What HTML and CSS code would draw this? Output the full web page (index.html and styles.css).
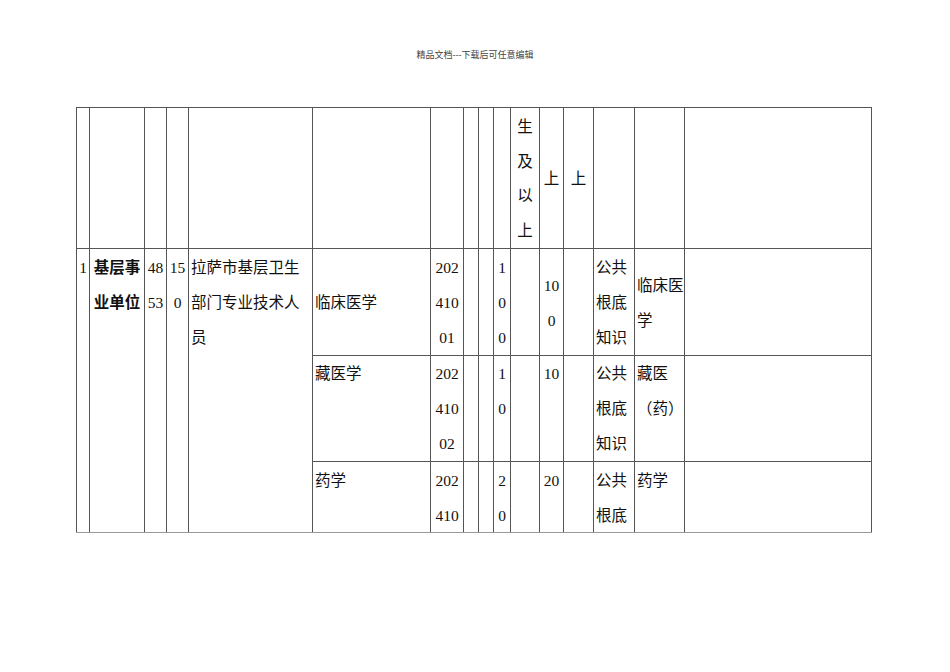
FILE: index.html
```html
<!DOCTYPE html>
<html lang="zh-CN">
<head>
<meta charset="utf-8">
<title>精品文档</title>
<link rel="stylesheet" href="styles.css">
</head>
<body>
<div class="page-head">精品文档---下载后可任意编辑</div>
<div class="sheet">
<table class="grid">
<colgroup>
<col class="c13"><col class="c55"><col class="c22"><col class="c22"><col class="c124"><col class="c118"><col class="c33"><col class="c15"><col class="c15"><col class="c17"><col class="c29"><col class="c24"><col class="c30"><col class="c41"><col class="c50"><col class="c187">
</colgroup>
<tr class="r-head">
<td></td><td></td><td></td><td></td><td></td><td></td><td></td><td></td><td></td><td></td>
<td class="mid ctr stack">生<br>及<br>以<br>上</td>
<td class="mid ctr">上</td>
<td class="mid ctr">上</td>
<td></td><td></td><td></td>
</tr>
<tr class="r1">
<td rowspan="3" class="ctr">1</td>
<td rowspan="3" class="ctr bold">基层事<br>业单位</td>
<td rowspan="3" class="ctr">48<br>53</td>
<td rowspan="3" class="ctr">15<br>0</td>
<td rowspan="3">拉萨市基层卫生部门专业技术人员</td>
<td class="mid">临床医学</td>
<td class="ctr">202<br>410<br>01</td>
<td></td><td></td>
<td class="ctr">1<br>0<br>0</td>
<td></td>
<td class="mid ctr">10<br>0</td>
<td></td>
<td>公共<br>根底<br>知识</td>
<td class="mid tight">临床医学</td>
<td></td>
</tr>
<tr class="r2">
<td>藏医学</td>
<td class="ctr">202<br>410<br>02</td>
<td></td><td></td>
<td class="ctr">1<br>0</td>
<td></td>
<td class="ctr">10</td>
<td></td>
<td>公共<br>根底<br>知识</td>
<td class="tight">藏医（药）</td>
<td></td>
</tr>
<tr class="r3">
<td>药学</td>
<td class="ctr">202<br>410<br>03</td>
<td></td><td></td>
<td class="ctr">2<br>0</td>
<td></td>
<td class="ctr">20</td>
<td></td>
<td>公共<br>根底<br>知识</td>
<td class="tight">药学</td>
<td></td>
</tr>
</table>
</div>
</body>
</html>
```
FILE: styles.css
```css
html, body {
  margin: 0;
  padding: 0;
  background: #fff;
}
body {
  font-family: "Liberation Serif", "Noto Sans CJK SC", serif;
  color: #111;
}
.page-head {
  margin-top: 49px;
  height: 12px;
  font-size: 9px;
  line-height: 12px;
  text-align: center;
  color: #444;
}
.sheet {
  margin-top: 46px;
  margin-left: 76px;
  width: 796px;
  height: 425px;
  overflow: hidden;
  border-bottom: 1px solid #999;
}
.grid {
  table-layout: fixed;
  border-collapse: collapse;
  width: 796px;
  font-size: 15.5px;
  line-height: 35px;
}
.grid td {
  border: 1px solid #555;
  padding: 1px 2px 0 2px;
  vertical-align: top;
  word-break: break-all;
  overflow: hidden;
}
.c13 { width: 13px; }
.c55 { width: 55px; }
.c22 { width: 22px; }
.c124 { width: 124px; }
.c118 { width: 118px; }
.c33 { width: 33px; }
.c15 { width: 15px; }
.c17 { width: 17px; }
.c29 { width: 29px; }
.c24 { width: 24px; }
.c30 { width: 30px; }
.c41 { width: 41px; }
.c50 { width: 50px; }
.c187 { width: 187px; }
.r-head td { height: 139px; padding: 0; }
.r-head td.stack { padding-top: 2px; height: 137px; line-height: 34.5px; }
.r1 td { height: 105px; }
.r2 td { height: 104px; padding-top: 0; }
.r3 td { height: 105px; }
.grid td.mid { vertical-align: middle; }
.grid td.ctr { text-align: center; padding-left: 0; padding-right: 0; }
.grid td.tight { padding-right: 0; }
.bold { font-weight: bold; }
```
